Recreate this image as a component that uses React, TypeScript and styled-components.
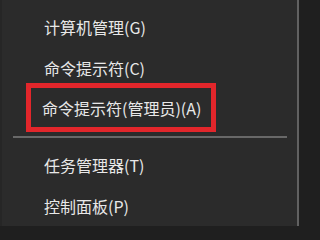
import styled, { createGlobalStyle } from "styled-components";

const GlobalStyle = createGlobalStyle`
  html, body {
    margin: 0;
    padding: 0;
    background: #1f1f1f;
  }
  body {
    width: 300px;
    height: 226px;
    overflow: hidden;
  }
`;

const Menu = styled.div`
  box-sizing: border-box;
  width: 299px;
  height: 226px;
  padding-top: 6px;
  background: #2b2b2b;
  border-left: 2px solid #262626;
  border-right: 2px solid #616161;
  display: flex;
  flex-direction: column;
  font-family: "Microsoft YaHei", "Noto Sans CJK SC", "Noto Sans", sans-serif;
  font-size: 16px;
  color: #e8e8e8;
`;

const Item = styled.div<{ $highlight?: boolean }>`
  display: flex;
  align-items: center;
  box-sizing: border-box;
  height: ${(p) => (p.$highlight ? 50 : 42)}px;
  padding-left: ${(p) => (p.$highlight ? 11 : 42)}px;
  white-space: nowrap;
  ${(p) =>
    p.$highlight &&
    `
    width: 190px;
    margin: -5px 0 0 24px;
    border: 5px solid #e2262b;
  `}
`;

const Separator = styled.div`
  height: 2px;
  margin: 4px 10px 6px 11px;
  background: #686868;
`;

const items = ["计算机管理(G)", "命令提示符(C)"];
const lower = ["任务管理器(T)", "控制面板(P)"];

export default function App() {
  return (
    <>
      <GlobalStyle />
      <Menu>
        {items.map((t) => (
          <Item key={t}>{t}</Item>
        ))}
        <Item $highlight>命令提示符(管理员)(A)</Item>
        <Separator />
        {lower.map((t) => (
          <Item key={t}>{t}</Item>
        ))}
      </Menu>
    </>
  );
}
